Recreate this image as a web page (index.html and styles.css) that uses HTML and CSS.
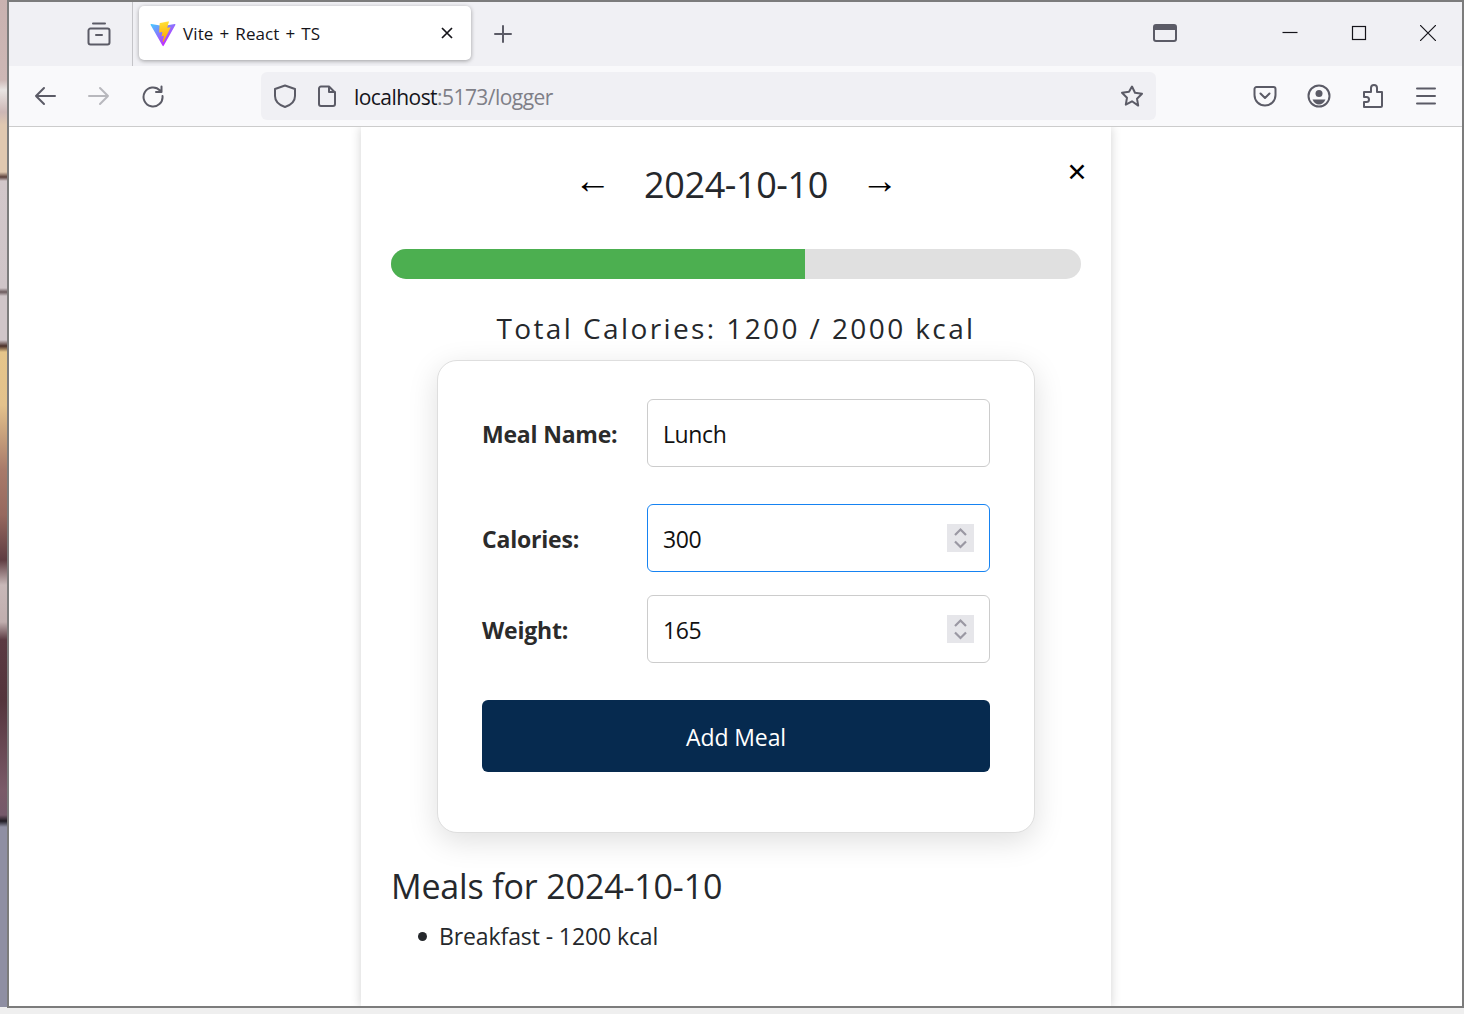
FILE: index.html
```html
<!DOCTYPE html>
<html lang="en">
<head>
<meta charset="utf-8">
<title>Vite + React + TS</title>
<link rel="stylesheet" href="styles.css">
</head>
<body>
<div class="wallpaper"></div>
<div class="window">
  <div class="tabstrip">
    <div class="tab-side">
      <svg class="ico" viewBox="0 0 24 24"><path d="M6 1.500h12M3.500 6.500h17a2 2 0 0 1 2 2v12a2 2 0 0 1-2 2h-17a2 2 0 0 1-2-2v-12a2 2 0 0 1 2-2zM9 13h6"/></svg>
    </div>
    <div class="tab">
      <svg class="favicon" viewBox="0 0 410 404">
        <defs>
          <linearGradient id="vl" x1="6" y1="33" x2="235" y2="344" gradientUnits="userSpaceOnUse"><stop offset="0" stop-color="#41d1ff"/><stop offset="1" stop-color="#bd34fe"/></linearGradient>
          <linearGradient id="vb" x1="194" y1="8" x2="236" y2="293" gradientUnits="userSpaceOnUse"><stop offset="0" stop-color="#ffea83"/><stop offset=".08" stop-color="#ffdd35"/><stop offset="1" stop-color="#ffa800"/></linearGradient>
        </defs>
        <path fill="url(#vl)" d="M399.641 59.525L215.643 388.545c-3.799 6.793-13.559 6.833-17.415.073L10.582 59.556c-4.201-7.366 2.099-16.288 10.447-14.796l184.195 32.923a10 10 0 0 0 3.544-.006l180.343-32.87c8.32-1.517 14.649 7.337 10.53 14.718z"/>
        <path fill="url(#vb)" d="M292.965 1.574L156.801 28.255a5 5 0 0 0-4.03 4.611l-8.376 141.464c-.197 3.332 2.863 5.918 6.115 5.168l37.91-8.749c3.547-.818 6.752 2.306 6.023 5.873l-11.263 55.153c-.758 3.712 2.727 6.886 6.352 5.785l23.415-7.114c3.63-1.102 7.118 2.081 6.35 5.796l-17.899 86.633c-1.12 5.419 6.088 8.374 9.094 3.728l2.008-3.103 110.954-221.428c1.858-3.707-1.346-7.935-5.418-7.15l-39.022 7.532c-3.667.707-6.787-2.708-5.752-6.296l25.469-88.291c1.036-3.594-2.095-7.012-5.766-6.293z"/>
      </svg>
      <span class="tab-title">Vite + React + TS</span>
      <svg class="tab-close" viewBox="0 0 16 16"><path d="M3 3l10 10M13 3L3 13"/></svg>
    </div>
    <svg class="ico new-tab" viewBox="0 0 24 24"><path d="M12 4v16M4 12h16"/></svg>
    <div class="strip-right">
      <svg class="ico tabs-view" viewBox="0 0 24 18"><rect x="1" y="1" width="22" height="16" rx="2"/><path class="fillbar" d="M1.500 1h21v5h-21z"/></svg>
      <div class="caption">
        <svg class="cap" viewBox="0 0 16 16"><path d="M.5 7.500h15"/></svg>
        <svg class="cap" viewBox="0 0 16 16"><rect x="1.500" y="1.500" width="13" height="13"/></svg>
        <svg class="cap" viewBox="0 0 16 16"><path d="M0 0l16 16M16 0L0 16"/></svg>
      </div>
    </div>
  </div>
  <div class="toolbar">
    <div class="nav">
      <svg class="ico" viewBox="0 0 24 24"><path d="M22 12H3M11 4l-8 8 8 8"/></svg>
      <svg class="ico off" viewBox="0 0 24 24"><path d="M2 12h19M13 4l8 8-8 8"/></svg>
      <svg class="ico" viewBox="0 0 24 24"><path d="M19 6.500A9.500 9.500 0 1 0 21.500 12M20.500 2.500V8h-5.500"/></svg>
    </div>
    <div class="urlbar">
      <svg class="ico shield" viewBox="0 0 24 24"><path d="M12 1.500l10 3.500v7c0 5.500-4 9-10 11C6 21 2 17.500 2 12V5z"/></svg>
      <svg class="ico page" viewBox="0 0 24 24"><path d="M6 2.500h8l6 6V20a2 2 0 0 1-2 2H6a2 2 0 0 1-2-2V4.500a2 2 0 0 1 2-2zM14 2.500V8h6"/></svg>
      <span class="url">localhost<span class="url-dim">:5173/logger</span></span>
      <svg class="ico star" viewBox="0 0 24 24"><path d="M12 2.500l3 6.300 7 1-5 4.900 1.200 6.900L12 17.300l-6.200 3.300L7 13.700 2 8.800l7-1z"/></svg>
    </div>
    <div class="actions">
      <svg class="ico" viewBox="0 0 24 24"><path d="M3.500 3h17a2 2 0 0 1 2 2v6c0 6-4.700 10.500-10.500 10.500S1.500 17 1.500 11V5a2 2 0 0 1 2-2zM7.500 9.500L12 14l4.500-4.500"/></svg>
      <svg class="ico" viewBox="0 0 24 24"><circle cx="12" cy="12" r="10.500"/><circle class="solid" cx="12" cy="9.500" r="3.500"/><path class="solid" d="M5.500 15.500h13c-1.500 3.500-3.800 5-6.500 5s-5-1.500-6.500-5z"/></svg>
      <svg class="ico ext" viewBox="0 0 24 24"><path d="M3 23v-5h2.500a2.500 2.500 0 0 0 0-5H3V8h7V4a3 3 0 0 1 6 0v4h5v13.500a1.500 1.500 0 0 1-1.500 1.500z"/></svg>
      <svg class="ico menu" viewBox="0 0 24 24"><path d="M3 4.500h18M3 12h18M3 19.500h18"/></svg>
    </div>
  </div>
  <main class="content">
    <section class="panel">
      <button class="close-x" type="button">✕</button>
      <header class="date-nav">
        <span class="arrow">←</span>
        <h1 class="date">2024-10-10</h1>
        <span class="arrow">→</span>
      </header>
      <div class="progress"><div class="progress-fill" style="width:60%"></div></div>
      <p class="total">Total Calories: 1200 / 2000 kcal</p>
      <form class="card">
        <div class="field field-meal">
          <label>Meal Name:</label>
          <div class="input">Lunch</div>
        </div>
        <div class="field field-cal">
          <label>Calories:</label>
          <div class="input focus">300
            <span class="spin"><svg viewBox="0 0 27 28"><path d="M8 11l5.500-5.500L19 11M8 17.500l5.500 5.500 5.500-5.500"/></svg></span>
          </div>
        </div>
        <div class="field field-weight">
          <label>Weight:</label>
          <div class="input">165
            <span class="spin"><svg viewBox="0 0 27 28"><path d="M8 11l5.500-5.500L19 11M8 17.500l5.500 5.500 5.500-5.500"/></svg></span>
          </div>
        </div>
        <button class="add" type="button">Add Meal</button>
      </form>
      <h2 class="meals-title">Meals for 2024-10-10</h2>
      <ul class="meals"><li>Breakfast - 1200 kcal</li></ul>
    </section>
  </main>
</div>
</body>
</html>
```
FILE: styles.css
```css
* { box-sizing: border-box; }
html, body { margin: 0; height: 100%; overflow: hidden; }
body {
  display: flex;
  height: 1014px;
  background: #efefef;
  font-family: "Open Sans", "Noto Sans", sans-serif;
  color: #25282c;
}
.wallpaper {
  flex: 0 0 7px;
  height: 1007px;
  background: linear-gradient(180deg,
    #c9b2b0 0, #cdb7b5 80px, #e9e4e2 90px, #cdb7b5 112px, #e0c8b0 125px, #e0c8b0 172px,
    #5a3f3a 177px, #d2c7ca 181px, #cfc5c8 288px, #6a5a5c 292px, #cfc5c8 296px,
    #cfc5c8 340px, #4a2f28 346px, #e5c58a 352px, #e3c28c 405px,
    #a87a6a 470px, #96685f 515px, #5f3d42 560px, #c8b8b8 585px, #c0aeae 622px,
    #5a3a42 640px, #54343c 700px, #7a5a68 790px, #75596a 815px, #1e1a22 821px,
    #8f8fa3 827px, #8f8fa3 1007px);
}
.window {
  flex: 1;
  height: 1008px;
  display: flex;
  flex-direction: column;
  border: 2px solid #7c7c7c;
  background: #fff;
  overflow: hidden;
}
.ico {
  width: 24px;
  height: 24px;
  fill: none;
  stroke: #5b5b66;
  stroke-width: 2;
  stroke-linecap: round;
  stroke-linejoin: round;
  flex: none;
}
.solid { fill: #5b5b66; stroke: none; }
.tabstrip {
  height: 64px;
  flex: none;
  display: flex;
  align-items: center;
  background: #f0f0f4;
}
.tab-side {
  width: 124px;
  height: 64px;
  display: flex;
  align-items: center;
  justify-content: flex-end;
  padding: 0 20px 0 0;
  border-right: 1px solid #c4c4c8;
}
.tab-side .ico { margin-right: 1px; }
.tab {
  margin: -2px 0 0 6px;
  width: 332px;
  height: 54px;
  background: #fff;
  border-radius: 5px;
  box-shadow: 0 1px 4px rgba(0, 0, 0, .35);
  display: flex;
  align-items: center;
  padding: 0 16px 0 11px;
}
.favicon { width: 26px; height: 26px; flex: none; margin-top: 1px; }
.tab-title {
  flex: 1;
  margin-left: 7px;
  padding-top: 1px;
  font-size: 17px;
  letter-spacing: .1px;
  word-spacing: 1.500px;
  color: #15141a;
}
.tab-close {
  width: 16px;
  height: 16px;
  fill: none;
  stroke: #15141a;
  stroke-width: 1.700;
}
.new-tab { margin-left: 20px; }
.strip-right {
  flex: 1;
  display: flex;
  align-items: center;
  justify-content: flex-end;
}
.tabs-view { width: 24px; height: 18px; margin-right: 105px; margin-top: -2px; }
.fillbar { fill: #5b5b66; stroke: none; }
.caption { display: flex; gap: 53px; align-items: center; padding-right: 26px; margin-top: -2px; }
.cap {
  width: 16px;
  height: 16px;
  fill: none;
  stroke: #15141a;
  stroke-width: 1.200;
}
.toolbar {
  height: 61px;
  flex: none;
  display: flex;
  align-items: center;
  background: #f9f9fb;
  border-bottom: 1px solid #ccc;
  padding-bottom: 1px;
}
.nav { display: flex; gap: 30px; margin-left: 24px; width: 228px; }
.nav .off { stroke: #b8b8bd; }
.urlbar {
  width: 895px;
  height: 48px;
  border-radius: 6px;
  background: #f0f0f4;
  display: flex;
  align-items: center;
  padding: 0 12px;
}
.shield { margin-right: 18px; }
.page { margin-right: 15px; }
.url {
  flex: 1;
  padding-top: 2px;
  font-size: 21px;
  letter-spacing: -.55px;
  color: #15141a;
}
.url-dim { color: #7f7f87; }
.actions { display: flex; gap: 30px; margin-left: 97px; }
.menu { margin-left: -1px; }
.content {
  flex: 1;
  display: flex;
  justify-content: center;
  min-height: 0;
  padding-left: 1px;
  overflow: hidden;
}
.panel {
  position: relative;
  flex: none;
  width: 750px;
  height: 880px;
  padding: 0 30px;
  background: #fff;
  box-shadow: 0 0 10px rgba(0, 0, 0, .18);
  display: flex;
  flex-direction: column;
  align-items: stretch;
}
.close-x {
  position: absolute;
  top: 34px;
  right: 22px;
  width: 24px;
  height: 24px;
  padding: 0;
  border: 0;
  background: none;
  font-size: 25px;
  line-height: 24px;
  color: #000;
  font-family: "DejaVu Sans", sans-serif;
}
.date-nav {
  display: flex;
  justify-content: center;
  align-items: center;
  gap: 33px;
  height: 58px;
  margin-top: 29px;
}
.date {
  margin: 0;
  font-size: 36px;
  font-weight: 400;
  line-height: 58px;
  letter-spacing: -.4px;
  color: #25282c;
}
.arrow {
  font-family: "Liberation Sans", sans-serif;
  font-size: 37px;
  line-height: 58px;
  margin-bottom: 9px;
  color: #000;
}
.progress {
  flex: none;
  height: 30px;
  margin-top: 35px;
  border-radius: 15px;
  background: #e0e0e0;
  overflow: hidden;
}
.progress-fill { height: 100%; background: #4caf50; }
.total {
  margin: 31px 0 0;
  text-align: center;
  font-size: 28px;
  line-height: 36px;
  letter-spacing: 2.400px;
  color: #25282c;
}
.card {
  flex: none;
  align-self: center;
  width: 598px;
  height: 473px;
  margin-top: 14px;
  padding: 38px 44px;
  background: #fff;
  border: 1px solid #dedede;
  border-radius: 20px;
  box-shadow: 0 8px 30px rgba(0, 0, 0, .13);
  display: flex;
  flex-direction: column;
}
.field { display: flex; align-items: center; }
.field-cal { margin-top: 37px; }
.field-weight { margin-top: 23px; }
.field label {
  width: 165px;
  padding-top: 2px;
  font-size: 23px;
  font-weight: 700;
  letter-spacing: -.2px;
  color: #2b2b2b;
}
.input {
  position: relative;
  flex: none;
  width: 343px;
  height: 68px;
  border: 1px solid #ccc;
  border-radius: 6px;
  padding: 2px 0 0 15px;
  display: flex;
  align-items: center;
  font-size: 23px;
  letter-spacing: -.4px;
  color: #111;
}
.focus { border-color: #1683f2; }
.spin {
  position: absolute;
  right: 15px;
  top: 19px;
  width: 27px;
  height: 28px;
  background: #e6e6ea;
}
.spin svg {
  display: block;
  width: 27px;
  height: 28px;
  fill: none;
  stroke: #9a98a3;
  stroke-width: 2.200;
}
.add {
  margin-top: 37px;
  flex: none;
  width: 508px;
  height: 72px;
  padding-top: 2px;
  border: 0;
  border-radius: 6px;
  background: #062a4f;
  color: #fff;
  font-family: inherit;
  font-size: 23px;
  letter-spacing: -.1px;
}
.meals-title {
  margin: 29px 0 0;
  font-size: 34px;
  font-weight: 400;
  line-height: 48px;
  letter-spacing: -.15px;
  color: #25282c;
}
.meals {
  display: flex;
  margin: 10px 0 0;
  padding-left: 27px;
  list-style: none;
  font-size: 23px;
  line-height: 32px;
  letter-spacing: -.1px;
  color: #25282c;
}
.meals li { display: flex; align-items: center; gap: 12px; }
.meals li::before {
  content: "";
  width: 9px;
  height: 9px;
  border-radius: 50%;
  background: #25282c;
}
```
